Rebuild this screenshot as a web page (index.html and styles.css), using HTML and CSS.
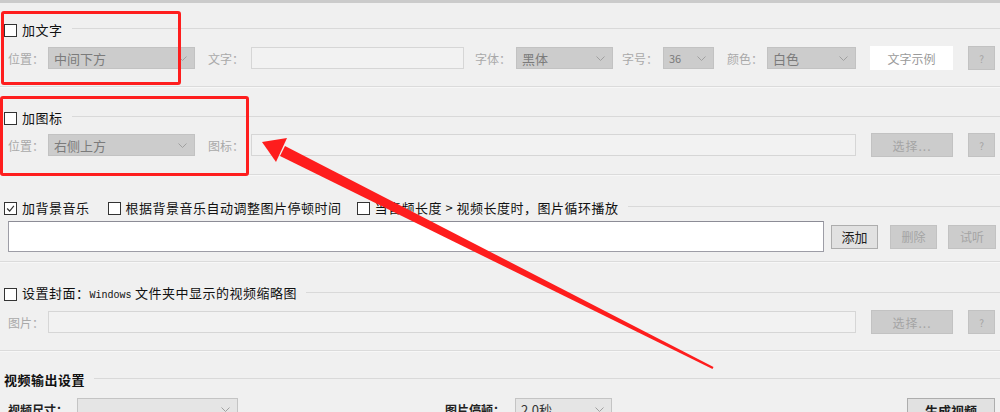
FILE: index.html
```html
<!DOCTYPE html>
<html lang="zh-CN">
<head>
    <meta charset="UTF-8" />
    <title>视频设置</title>
    <link rel="stylesheet" href="styles.css">
</head>
<body>
<div class="page">

    <!-- 加文字 -->
    <div class="head head-1">
        <span class="check"></span>
        <span class="head-text">加文字</span>
        <span class="head-line"></span>
    </div>
    <div class="row row-1">
        <span class="label w40">位置：</span>
        <span class="select off w147">中间下方<svg class="chev" viewBox="0 0 9 5"><polyline points="0.5,0.5 4.5,4.5 8.5,0.5"/></svg></span>
        <span class="label w43 ml13">文字：</span>
        <span class="input off w213"></span>
        <span class="label w41 ml11">字体：</span>
        <span class="select off w97">黑体<svg class="chev" viewBox="0 0 9 5"><polyline points="0.5,0.5 4.5,4.5 8.5,0.5"/></svg></span>
        <span class="label w41 ml9">字号：</span>
        <span class="select off w51 small">36<svg class="chev" viewBox="0 0 9 5"><polyline points="0.5,0.5 4.5,4.5 8.5,0.5"/></svg></span>
        <span class="label w40 ml13">颜色：</span>
        <span class="select off w89">白色<svg class="chev" viewBox="0 0 9 5"><polyline points="0.5,0.5 4.5,4.5 8.5,0.5"/></svg></span>
        <span class="sample">文字示例</span>
        <span class="btn off help">?</span>
    </div>
    <div class="sep sep-1"></div>

    <!-- 加图标 -->
    <div class="head head-2">
        <span class="check"></span>
        <span class="head-text">加图标</span>
        <span class="head-line"></span>
    </div>
    <div class="row row-2">
        <span class="label w40">位置：</span>
        <span class="select off w147">右侧上方<svg class="chev" viewBox="0 0 9 5"><polyline points="0.5,0.5 4.5,4.5 8.5,0.5"/></svg></span>
        <span class="label w43 ml13">图标：</span>
        <span class="input off w605"></span>
        <span class="btn off pick">选择...</span>
        <span class="btn off help">?</span>
    </div>
    <div class="sep sep-2"></div>

    <!-- 背景音乐 -->
    <div class="head head-3">
        <span class="check on"><svg viewBox="0 0 13 13"><polyline points="2.5,6.5 5.5,9.5 10.5,3.5"/></svg></span>
        <span class="head-text">加背景音乐</span>
        <span class="check ml18"></span>
        <span class="head-text">根据背景音乐自动调整图片停顿时间</span>
        <span class="check ml15"></span>
        <span class="head-text">当音频长度 &gt; 视频长度时，图片循环播放</span>
        <span class="head-line"></span>
    </div>
    <div class="row row-3">
        <span class="input music"></span>
        <span class="btn on w47 ml7">添加</span>
        <span class="btn off w47 ml12">删除</span>
        <span class="btn off w48 ml11">试听</span>
    </div>
    <div class="sep sep-3"></div>

    <!-- 封面 -->
    <div class="head head-4">
        <span class="check"></span>
        <span class="head-text">设置封面：<span class="mono">Windows</span> 文件夹中显示的视频缩略图</span>
        <span class="head-line"></span>
    </div>
    <div class="row row-4">
        <span class="label w40">图片：</span>
        <span class="input off w808"></span>
        <span class="btn off pick">选择...</span>
        <span class="btn off help">?</span>
    </div>
    <div class="sep sep-4"></div>

    <!-- 视频输出设置 -->
    <div class="head head-5">
        <span class="head-text">视频输出设置</span>
        <span class="head-line"></span>
    </div>
    <div class="row row-5">
        <span class="label dark w69">视频尺寸：</span>
        <span class="select w161"><svg class="chev" viewBox="0 0 9 5"><polyline points="0.5,0.5 4.5,4.5 8.5,0.5"/></svg></span>
        <span class="label dark w70 ml207">图片停顿：</span>
        <span class="select w97">2.0秒<svg class="chev" viewBox="0 0 9 5"><polyline points="0.5,0.5 4.5,4.5 8.5,0.5"/></svg></span>
        <span class="btn on make">生成视频</span>
    </div>

    <!-- annotations -->
    <div class="mark mark-1"></div>
    <div class="mark mark-2"></div>
    <svg class="arrow" viewBox="0 0 1000 412" width="1000" height="412">
        <polygon points="262,142 287,138 276,162"/>
        <polygon points="285,146 280,156 712.5,369 713.5,367"/>
    </svg>
</div>
</body>
</html>
```

FILE: styles.css
```css
body {
    margin: 0;
    background: #f0f0f0;
    font-family: "Noto Sans CJK SC", "Noto Sans", sans-serif;
    font-size: 12px;
    color: #222;
    overflow: hidden;
}

.page {
    position: relative;
    width: 1000px;
    height: 412px;
    border-top: 3px solid #cbcbcb;
    box-sizing: border-box;
    overflow: hidden;
}

/* group headers */
.head {
    display: flex;
    align-items: center;
    height: 14px;
    padding-left: 4px;
}

.head-text {
    font-size: 13px;
    letter-spacing: 0.5px;
    line-height: 14px;
    color: #111;
    white-space: nowrap;
}

.head-line {
    flex: 1;
    height: 1px;
    background: #d9d9d9;
    margin-left: 9px;
    margin-top: -3px;
}

.mono {
    font-family: "Liberation Mono", monospace;
    font-size: 10px;
    letter-spacing: 0;
}

.check {
    display: inline-block;
    width: 13px;
    height: 13px;
    box-sizing: border-box;
    border: 1px solid #333;
    background: #fff;
    margin-right: 5px;
    flex: none;
}

.check svg {
    display: block;
    width: 11px;
    height: 11px;
    fill: none;
    stroke: #333;
    stroke-width: 1.4;
}

.head-1 { margin-top: 20px; }
.head-2 { margin-top: 23px; }
.head-3 { margin-top: 25px; }
.head-4 { margin-top: 24px; }
.head-5 { margin-top: 21px; }
.head-5 .head-text { font-weight: bold; }

/* rows */
.row {
    display: flex;
    align-items: center;
    padding-left: 8px;
    height: 22px;
}

.row-1 { margin-top: 10px; }
.row-2 { margin-top: 9px; }
.row-3 { margin-top: 6px; height: 31px; }
.row-4 { margin-top: 10px; }
.row-5 { margin-top: 11px; }

.label {
    color: #a9a9a9;
    white-space: nowrap;
    flex: none;
}

.label.dark {
    color: #222;
    font-weight: bold;
}

.select {
    position: relative;
    display: flex;
    align-items: center;
    height: 22px;
    box-sizing: border-box;
    padding-left: 5px;
    background: #e5e5e5;
    border: 1px solid #c4c4c4;
    color: #333;
    font-size: 13px;
    flex: none;
}

.select.off {
    background: #cccccc;
    border-color: #c2c2c2;
    color: #7b7b7b;
}

.select.small { font-size: 11px; }

.chev {
    position: absolute;
    right: 7px;
    top: 8px;
    width: 9px;
    height: 5px;
    fill: none;
    stroke: #a0a0a0;
    stroke-width: 1;
}

.input {
    height: 22px;
    box-sizing: border-box;
    border: 1px solid #d6d6d6;
    background: #f2f2f2;
    flex: none;
}

.input.music {
    width: 816px;
    height: 31px;
    background: #fff;
    border: 1px solid #9d9da6;
    border-top-color: #8c8c96;
}

.btn {
    display: flex;
    align-items: center;
    justify-content: center;
    height: 24px;
    box-sizing: border-box;
    font-size: 12px;
    flex: none;
}

.btn.off {
    background: #cccccc;
    border: 1px solid #c2c2c2;
    color: #a4a4a4;
}

.btn.on {
    background: #e1e1e1;
    border: 1px solid #adadad;
    color: #1e1e1e;
    font-size: 13px;
}

.help {
    width: 27px;
    margin-left: 15px;
    font-size: 10px;
}

.pick {
    width: 82px;
    margin-left: 15px;
    letter-spacing: 1px;
}

.make {
    width: 88px;
    margin-left: 295px;
    margin-top: 2px;
    font-weight: bold;
}

.sample {
    display: flex;
    align-items: center;
    justify-content: center;
    width: 83px;
    height: 24px;
    margin-left: 14px;
    background: #fff;
    color: #9a9a9a;
    flex: none;
}

/* separators */
.sep {
    height: 1px;
    background: #dbdbdb;
    border-bottom: 1px solid #f7f7f7;
}

.sep-1 { margin-top: 17px; }
.sep-2 { margin-top: 18px; }
.sep-3 { margin-top: 9px; }
.sep-4 { margin-top: 17px; }

/* widths and spacing */
.w40 { width: 40px; }
.w41 { width: 41px; }
.w43 { width: 43px; }
.w47 { width: 47px; }
.w48 { width: 48px; }
.w51 { width: 51px; }
.w69 { width: 69px; }
.w70 { width: 70px; }
.w89 { width: 89px; }
.w97 { width: 97px; }
.w147 { width: 147px; }
.w161 { width: 161px; }
.w213 { width: 213px; }
.w605 { width: 605px; }
.w808 { width: 808px; }
.ml7 { margin-left: 7px; }
.ml9 { margin-left: 9px; }
.ml11 { margin-left: 11px; }
.ml12 { margin-left: 12px; }
.ml13 { margin-left: 13px; }
.ml15 { margin-left: 15px; }
.ml18 { margin-left: 18px; }
.ml207 { margin-left: 207px; }

/* red annotation marks */
.mark {
    position: absolute;
    border: 3px solid #fe1d1d;
    border-radius: 3px;
    box-sizing: border-box;
}

.mark-1 {
    left: 1px;
    top: 8px;
    width: 180px;
    height: 74px;
}

.mark-2 {
    left: 0;
    top: 93px;
    width: 249px;
    height: 80px;
}

.arrow {
    position: absolute;
    left: 0;
    top: -3px;
    fill: #fe1d1d;
}
```
